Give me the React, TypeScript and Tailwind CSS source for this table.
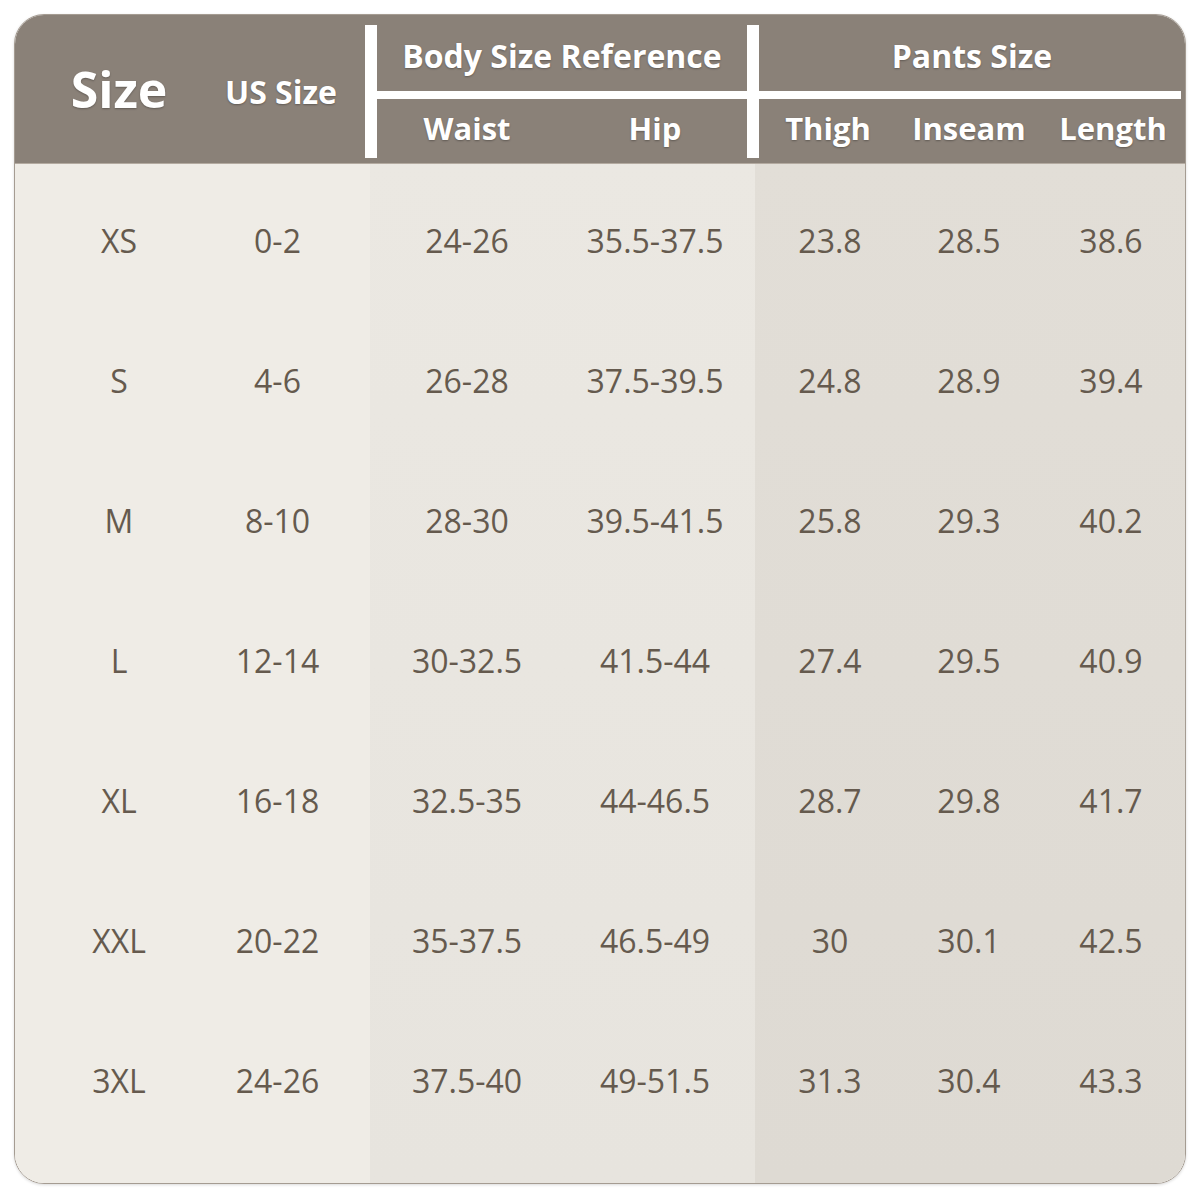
const rows = [
  ["XS", "0-2", "24-26", "35.5-37.5", "23.8", "28.5", "38.6"],
  ["S", "4-6", "26-28", "37.5-39.5", "24.8", "28.9", "39.4"],
  ["M", "8-10", "28-30", "39.5-41.5", "25.8", "29.3", "40.2"],
  ["L", "12-14", "30-32.5", "41.5-44", "27.4", "29.5", "40.9"],
  ["XL", "16-18", "32.5-35", "44-46.5", "28.7", "29.8", "41.7"],
  ["XXL", "20-22", "35-37.5", "46.5-49", "30", "30.1", "42.5"],
  ["3XL", "24-26", "37.5-40", "49-51.5", "31.3", "30.4", "43.3"],
];

// body columns: width + padding so the text centres line up with the header
const columns = [
  { cls: "w-[208px]", zone: "bg-[#efece6]" },
  { cls: "w-[147px] pr-[38px]", zone: "bg-[#efece6]" },
  { cls: "w-[194px]", zone: "bg-gradient-to-b from-[#ebe8e2] to-[#e7e4de]" },
  { cls: "w-[191px] pr-[9px]", zone: "bg-gradient-to-b from-[#ebe8e2] to-[#e7e4de]" },
  { cls: "w-[150px]", zone: "bg-gradient-to-b from-[#e2ded7] to-[#dedad3]" },
  { cls: "w-[128px]", zone: "bg-gradient-to-b from-[#e2ded7] to-[#dedad3]" },
  { cls: "w-[152px] pl-[4px]", zone: "bg-gradient-to-b from-[#e2ded7] to-[#dedad3]" },
];

const headText = "text-white font-bold whitespace-nowrap [text-shadow:0_1px_2px_rgba(0,0,0,0.3)]";

export default function App() {
  return (
    <div className="w-[1200px] h-[1200px] bg-white pt-[14px] pl-[14px] font-['Open_Sans',sans-serif]">
      <div className="w-[1172px] h-[1170px] rounded-[30px] border border-[#a59c92] overflow-hidden flex flex-col shadow-[0_1px_3px_rgba(0,0,0,0.15)]">
        {/* Header */}
        <div className="h-[149px] bg-[#8a8178] flex border-b border-[#b3aaa0]">
          <div className={`w-[208px] flex items-center justify-center text-[50px] ${headText}`}>Size</div>
          <div className={`w-[142px] flex items-center justify-center pr-[26px] pt-[6px] text-[32px] ${headText}`}>US Size</div>
          <div className="w-[12px] bg-white mt-[10px] mb-[5px]" />
          <div className="flex-1 flex flex-col pt-[10px] pb-[5px]">
            <div className="h-[66px] flex pb-[5px]">
              <div className={`w-[370px] flex items-center justify-center text-[32px] ${headText}`}>Body Size Reference</div>
              <div className="w-[12px] bg-white -mb-[5px]" />
              <div className={`flex-1 flex items-center justify-center text-[32px] ${headText}`}>Pants Size</div>
            </div>
            <div className="h-[8px] bg-white mr-[4px]" />
            <div className="flex-1 flex">
              <div className={`w-[180px] flex items-center justify-center text-[31px] ${headText}`}>Waist</div>
              <div className={`w-[190px] flex items-center justify-center pl-[6px] text-[31px] ${headText}`}>Hip</div>
              <div className="w-[12px] bg-white" />
              <div className={`w-[138px] flex items-center justify-center text-[31px] ${headText}`}>Thigh</div>
              <div className={`w-[144px] flex items-center justify-center text-[31px] ${headText}`}>Inseam</div>
              <div className={`w-[144px] flex items-center justify-center text-[31px] ${headText}`}>Length</div>
            </div>
          </div>
        </div>

        {/* Body */}
        <div className="flex-1 flex">
          {columns.map((col, ci) => (
            <div key={ci} className={`${col.cls} ${col.zone} flex flex-col pt-[7px]`}>
              {rows.map((r, ri) => (
                <div
                  key={ri}
                  className="h-[140px] flex items-center justify-center text-[32px] font-medium text-[#655a4e]"
                >
                  {r[ci]}
                </div>
              ))}
            </div>
          ))}
        </div>
      </div>
    </div>
  );
}
